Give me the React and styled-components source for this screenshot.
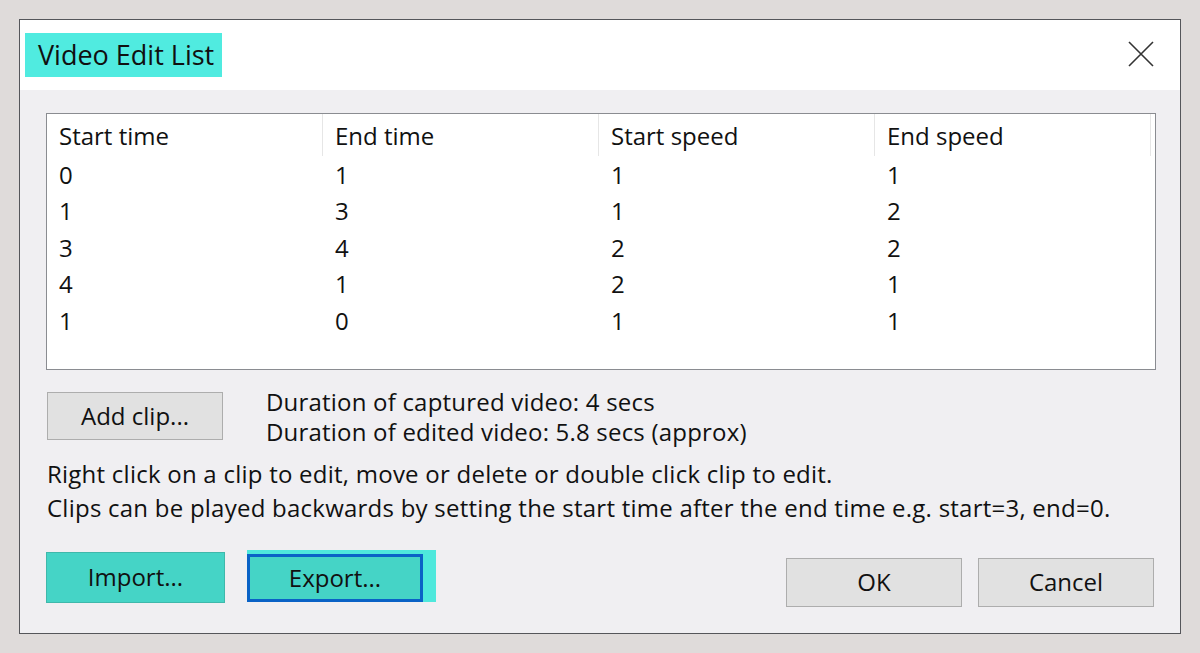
import styled, { createGlobalStyle } from 'styled-components'

const GlobalStyle = createGlobalStyle`
  html, body {
    margin: 0;
    padding: 0;
    background: #dfdbda;
  }
  body {
    font-family: "Open Sans", "Noto Sans", sans-serif;
    color: #111;
  }
`

const Page = styled.div`
  width: 1200px;
  height: 653px;
  padding: 19px 0 0 19px;
  box-sizing: border-box;
`

const Dialog = styled.div`
  width: 1162px;
  height: 615px;
  border: 1px solid #55565a;
  box-sizing: border-box;
  background: #f0eff2;
  display: flex;
  flex-direction: column;
`

const TitleBar = styled.header`
  height: 70px;
  background: #ffffff;
  display: flex;
  align-items: center;
  justify-content: space-between;
  padding: 0 26px 0 5px;
  flex-shrink: 0;
`

const Title = styled.h1`
  margin: 0;
  font-size: 27px;
  font-weight: normal;
  background: #50ebe0;
  height: 44px;
  line-height: 44px;
  padding: 0 8px 0 13px;
  color: #101010;
`

const CloseButton = styled.button`
  border: none;
  background: transparent;
  padding: 0;
  width: 26px;
  height: 26px;
  display: flex;
  align-items: center;
  justify-content: center;
  margin-top: -2px;
`

const Body = styled.main`
  padding: 23px 0 0 26px;
  display: flex;
  flex-direction: column;
`

const ListBox = styled.div`
  width: 1110px;
  height: 257px;
  border: 1px solid #8a8c91;
  box-sizing: border-box;
  background: #ffffff;
  font-size: 24px;
`

const Row = styled.div`
  display: grid;
  grid-template-columns: 276px 276px 276px 276px;
  height: ${(p) => (p.$header ? '42px' : '36.5px')};
  align-items: center;
`

const Cell = styled.div`
  padding-left: 12px;
  height: 100%;
  display: flex;
  align-items: center;
  border-right: ${(p) => (p.$header ? '1px solid #e6e6e6' : 'none')};
  box-sizing: border-box;
`

const Middle = styled.div`
  display: flex;
  align-items: flex-start;
  margin-top: 22px;
  margin-left: 1px;
  gap: 43px;
`

const Button = styled.button`
  width: ${(p) => p.$w || '176px'};
  height: ${(p) => p.$h || '48px'};
  font-family: inherit;
  font-size: 24px;
  color: #111;
  background: ${(p) => (p.$teal ? '#45d4c6' : '#e1e1e1')};
  border: ${(p) => (p.$focus ? '3px solid #0a62c6' : p.$teal ? '1px solid #3fb8ab' : '1px solid #adadad')};
  padding: 0 0 2px 0;
  box-sizing: border-box;
`

const Duration = styled.div`
  font-size: 24px;
  line-height: 30px;
  letter-spacing: 0.2px;
  margin-top: -5px;
`

const Help = styled.p`
  margin: 10px 0 0 1px;
  font-size: 24px;
  line-height: 34px;
  letter-spacing: 0.24px;
`

const Footer = styled.footer`
  display: flex;
  align-items: flex-start;
  margin-top: 27px;
`

const Highlight = styled.div`
  background: #4ee8dc;
  padding: 0 13px 0 0;
  margin-left: 22px;
  margin-top: -2px;
  height: 52px;
  display: flex;
  align-items: flex-end;
`

const Spacer = styled.div`
  flex: 1;
`

const RightButtons = styled.div`
  display: flex;
  gap: 16px;
  margin-top: 6px;
  margin-right: 26px;
`

const rows = [
  [0, 1, 1, 1],
  [1, 3, 1, 2],
  [3, 4, 2, 2],
  [4, 1, 2, 1],
  [1, 0, 1, 1],
]

const headers = ['Start time', 'End time', 'Start speed', 'End speed']

const App = () => {
  return (
    <Page>
      <GlobalStyle />
      <Dialog>
        <TitleBar>
          <Title>Video Edit List</Title>
          <CloseButton aria-label="Close">
            <svg width="26" height="26" viewBox="0 0 26 26">
              <path d="M1 1 L25 25 M25 1 L1 25" stroke="#333" strokeWidth="1.6" fill="none" />
            </svg>
          </CloseButton>
        </TitleBar>
        <Body>
          <ListBox>
            <Row $header>
              {headers.map((h) => (
                <Cell key={h} $header>{h}</Cell>
              ))}
            </Row>
            {rows.map((r, i) => (
              <Row key={i}>
                {r.map((v, j) => (
                  <Cell key={j}>{v}</Cell>
                ))}
              </Row>
            ))}
          </ListBox>
          <Middle>
            <Button>Add clip...</Button>
            <Duration>
              Duration of captured video: 4 secs<br />
              Duration of edited video: 5.8 secs (approx)
            </Duration>
          </Middle>
          <Help>
            Right click on a clip to edit, move or delete or double click clip to edit.<br />
            Clips can be played backwards by setting the start time after the end time e.g. start=3, end=0.
          </Help>
          <Footer>
            <Button $teal $w="179px" $h="51px">Import...</Button>
            <Highlight>
              <Button $teal $focus $h="48px">Export...</Button>
            </Highlight>
            <Spacer />
            <RightButtons>
              <Button $h="49px">OK</Button>
              <Button $h="49px">Cancel</Button>
            </RightButtons>
          </Footer>
        </Body>
      </Dialog>
    </Page>
  )
}

export default App
